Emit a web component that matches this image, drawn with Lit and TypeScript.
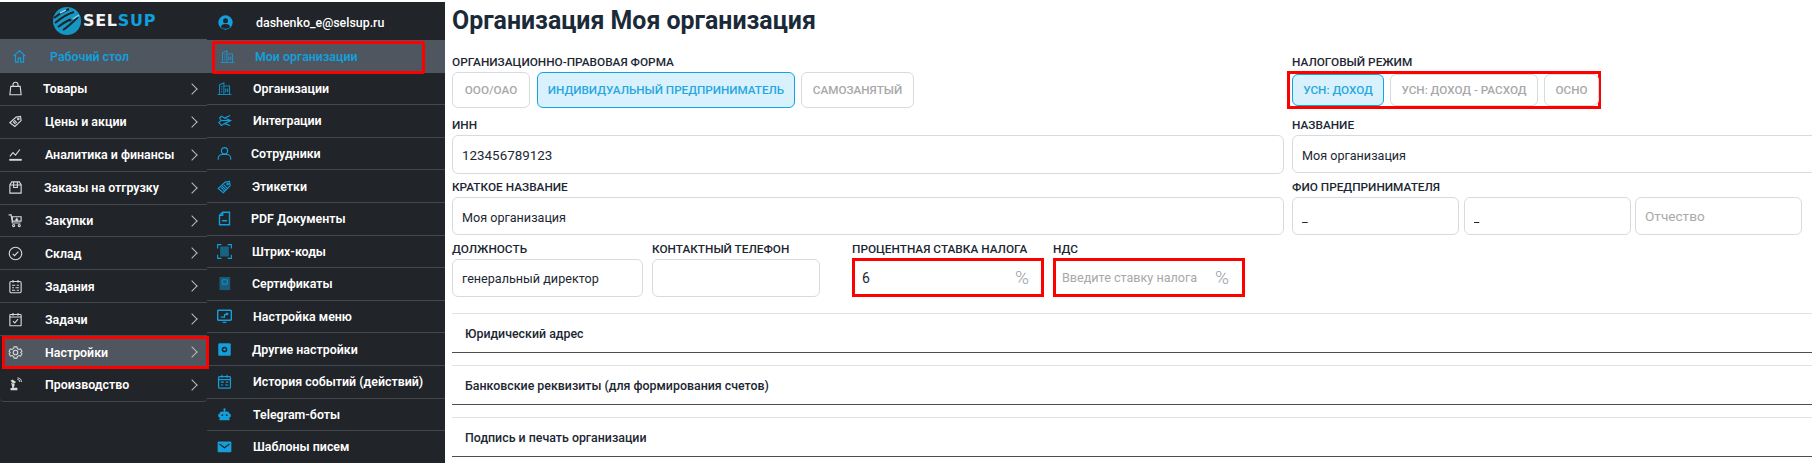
import { LitElement, html, css, svg } from "lit";
import { customElement } from "lit/decorators.js";

const icons: Record<string, any> = {
  acct: svg`<circle cx="12" cy="12" r="11.500" fill="currentColor" stroke="none"/><circle cx="12" cy="9" r="4" fill="#212429" stroke="none"/><path d="M4.500 19c1-3.500 4-4.500 7.500-4.500s6.500 1 7.500 4.500a10.500 10.500 0 0 1-15 0z" fill="#212429" stroke="none"/>`,
  home: svg`<path d="M2.500 11.500 12 3l9.500 8.500M5.500 9.500V21H10v-6.500h4V21h4.500V9.500"/>`,
  bag: svg`<path d="M4.500 8.500h15L21 22H3zM8 8.500V6a4 4 0 0 1 8 0v2.500"/>`,
  tag: svg`<path d="M3 14 13 5l7-1 1 6.500L11 20z"/><circle cx="16.500" cy="8" r="1.200"/><path d="m8 12 4 4M10 10l4 4"/>`,
  chart: svg`<path d="m3 15 5-6 4 4 7-9"/><path d="M2 20.500h20" stroke-width="3"/>`,
  box: svg`<path d="M3 7.500 6 3h12l3 4.500V21H3zM3 8h18M9 3v9h6V3"/>`,
  cart: svg`<path d="M1 3h4l2 13h13M7 6h14v7H7zM14 7.500v4M12 10l2 2 2-2"/><circle cx="9" cy="20" r="1.700"/><circle cx="18" cy="20" r="1.700"/>`,
  check: svg`<circle cx="12" cy="12" r="10"/><path d="m7.500 12.500 3 3 6-6.500"/>`,
  cal: svg`<rect x="3" y="4" width="18" height="18" rx="2"/><path d="M8 1.500V6M16 1.500V6M6.500 10h5M14 10h3.500M6.500 14h3M12 14h5.500M6.500 18h5M14 18h3.500"/>`,
  calc: svg`<rect x="3" y="4" width="18" height="18" rx="1"/><path d="M8 1.500V6M16 1.500V6M3 8h18M8 14.500l3 3 5-6"/>`,
  gear: svg`<path d="M9.500 2h5l.8 3 2.800 1.500 3-.8 2.400 4.300L21.300 12l2.200 2-2.400 4.300-3-.8-2.800 1.600-.8 2.900h-5l-.8-2.900-2.800-1.600-3 .8L.5 14l2.200-2L.5 9.900l2.400-4.200 3 .8 2.800-1.600z" transform="translate(1.200 1.200) scale(.9)"/><circle cx="12" cy="12" r="3.600"/>`,
  robot: svg`<path d="M5 9 11 12 9 17H15L15 21H4V18L7 17z" fill="currentColor" stroke="none"/><path d="M7 4 13 8 9 11 4 6z" fill="currentColor" stroke="none"/><path d="M15 4a4 4 0 0 1 4 4M15 1.500a6.500 6.500 0 0 1 6.500 6.500" stroke-width="1.500"/>`,
  build: svg`<g opacity=".8"><path d="M1 21.500h22M4 21V6l7-3v18M11 8h9v13M6.500 9h2M6.500 13h2M6.500 17h2M14 12v6M17 12v6"/></g>`,
  integ: svg`<path d="M21 4 12 8l-5-3-3 3 3 4-4 3 4 5 5-3 9 3M12 8l10 4-10 5M7 12h15"/>`,
  user: svg`<circle cx="12" cy="7.500" r="5"/><path d="M2 22v-2c0-4 3-6.500 6-6.500h8c3 0 6 2.500 6 6.500v2"/>`,
  tagb: svg`<path d="M2 15 13 5l7-1 1 7L10 22z"/><circle cx="17" cy="8" r="1.300"/><path d="m6 13 6 6M8 11l6 6M10.500 9l6 6"/>`,
  pdf: svg`<path d="M9 2h11v20H4V7zM9 2v5H4M8 15.500h8" stroke-width="2.200"/>`,
  bar: svg`<path d="M1 7V1h6M17 1h6v6M23 17v6h-6M7 23H1v-6"/><rect x="5" y="4" width="14" height="16" fill="currentColor" opacity=".5" stroke="none"/>`,
  cert: svg`<rect x="4" y="1.500" width="17" height="21" fill="currentColor" opacity=".45" stroke="none"/><rect x="8.500" y="6" width="8" height="7" rx="1" opacity=".7"/>`,
  mon: svg`<rect x="1" y="2" width="22" height="16" rx="2" stroke-width="2.500"/><path d="M6 13h6v-4h6M9 21.500h6M14 7h4" stroke-width="2"/>`,
  gearb: svg`<rect x="2" y="2" width="20" height="20" rx="2" fill="currentColor" stroke="none"/><circle cx="12" cy="12" r="4.500" fill="#212429" stroke="none"/><circle cx="12" cy="12" r="2" fill="currentColor" stroke="none"/>`,
  calb: svg`<rect x="2.500" y="4" width="19" height="18.500" rx="1.500" stroke-width="2"/><path d="M8 1v5M16 1v5M2.500 9h19M6 13h5M14 13h4M6 17.500h4M13 17.500h5" stroke-width="1.800"/>`,
  bot: svg`<path d="M12 2a2 2 0 0 1 1 3.700V7h3a4 4 0 0 1 4 4h2v5h-2v5H4v-5H2v-5h2a4 4 0 0 1 4-4h3V5.700A2 2 0 0 1 12 2z" fill="currentColor" stroke="none"/><circle cx="8.500" cy="13" r="1.500" fill="#212429" stroke="none"/><circle cx="15.500" cy="13" r="1.500" fill="#212429" stroke="none"/>`,
  mail: svg`<rect x="1" y="4" width="22" height="17" rx="1.500" fill="currentColor" stroke="none"/><path d="m4 8 8 6 8-6" stroke="#212429" stroke-width="2"/>`,
};

const ico = (n: string, size = 16) => html`<svg class="ico" width=${size} height=${size} viewBox="0 0 24 24" fill="none" stroke="currentColor" stroke-width="1.800">${icons[n]}</svg>`;

const left = [
  ["bag", "Товары", 29],
  ["tag", "Цены и акции", 31],
  ["chart", "Аналитика и финансы", 31],
  ["box", "Заказы на отгрузку", 30],
  ["cart", "Закупки", 31],
  ["check", "Склад", 31],
  ["cal", "Задания", 31],
  ["calc", "Задачи", 31],
  ["gear", "Настройки", 31, "mark"],
  ["robot", "Производство", 31],
];
const right = [
  ["build", "Организации", 29],
  ["integ", "Интеграции", 29],
  ["user", "Сотрудники", 27],
  ["tagb", "Этикетки", 28],
  ["pdf", "PDF Документы", 27],
  ["bar", "Штрих-коды", 28],
  ["cert", "Сертификаты", 28],
  ["mon", "Настройка меню", 29],
  ["gearb", "Другие настройки", 28],
  ["calb", "История событий (действий)", 29],
  ["bot", "Telegram-боты", 29],
  ["mail", "Шаблоны писем", 29],
];

@customElement("app-root")
export class AppRoot extends LitElement {
  static styles = css`
    :host { display: block; width: 1812px; height: 463px; overflow: hidden; font-family: Roboto, sans-serif; background: #fff; }
    * { box-sizing: border-box; }
    .page { display: flex; height: 463px; }
    .nav { width: 207px; flex: none; background: #212429; margin-top: 2px; height: 461px; color: #fff; position: relative; z-index: 1; }
    .sub { width: 238px; flex: none; background: #212429; margin-top: 2px; height: 461px; color: #fff; }
    .logo { height: 37px; display: flex; align-items: center; padding: 0 0 0 52px; gap: 1px; }
    .logo-t { font: 900 16px "DejaVu Sans", sans-serif; letter-spacing: .7px; color: #f2f4f5; }
    .logo-t b { color: #0f9fdc; font-weight: 900; }
    .mrow { height: 32.9px; display: flex; align-items: center; border-bottom: 1px solid #44484d; font-size: 12.4px; font-weight: 600; position: relative; color: #fff; }
    .mrow .ic { width: 30px; flex: none; display: flex; justify-content: center; color: #d9d9d9; }
    .mrow .lb { flex: 1; white-space: nowrap; position: relative; }
    .chev { width: 8px; height: 8px; border-top: 1px solid #bbb; border-right: 1px solid #bbb; transform: rotate(45deg); position: absolute; left: 188px; top: 12px; }
    .home { height: 34px; background: #4f565f; border: 0; color: #129fdc; }
    .home .ic { color: #129fdc; width: 38px; }
    .home .lb { margin-left: 12px; color: #129fdc; }
    .mark { border: 0; }
    .mark::before { content: ""; position: absolute; left: 2px; right: -2px; top: 0; bottom: 0; background: #4f565f; border: 3px solid #f00; }
    .mark .ic { position: relative; }
    .last { border-radius: 0 0 4px 4px; }
    .hdr { height: 38px; display: flex; align-items: center; padding-top: 3px; font-size: 12.4px; font-weight: 500; }
    .hdr .ic { width: 36px; display: flex; justify-content: center; color: #129fdc; }
    .hdr .lb { margin-left: 13px; }
    .srow { height: 32.6px; display: flex; align-items: center; border-bottom: 1px solid #44484d; font-size: 12.4px; font-weight: 600; white-space: nowrap; }
    .srow .ic { width: 34px; display: flex; justify-content: center; color: #129fdc; flex: none; }
    .sact { background: #4f565f; position: relative; color: #129fdc; border: 0; }
    .sact .box { position: absolute; left: 5px; top: 1px; width: 213px; height: 33px; border: 3px solid #f00; border-radius: 2px; }
    .sact .ic { width: 40px; }
    .sact .lb { margin-left: 8px; }
    main { flex: 1; min-width: 0; overflow: hidden; padding-left: 7px; color: #1c2733; }
    h1 { margin: 0; height: 53px; padding-top: 7px; font-size: 24.9px; line-height: 28px; font-weight: 700; color: #1b2a38; white-space: nowrap; }
    .grid { display: grid; grid-template-columns: 832px 540px; column-gap: 8px; }
    .f { min-width: 0; }
    .f.r1 { height: 63px; }
    .f.r2 { height: 62px; }
    .f.r3 { height: 62px; }
    label { display: block; height: 19px; line-height: 18px; font-size: 11.8px; font-weight: 500; color: #1c2733; white-space: nowrap; }
    .btns { display: flex; }
    .btn { height: 36px; border: 1px solid #d6dbdf; border-radius: 6px; background: #fff; color: #a8a8a8; font: 500 11.7px Roboto, sans-serif; display: flex; align-items: center; justify-content: center; white-space: nowrap; flex: none; }
    .btn.on { background: #d9f1fc; border-color: #0ea5e0; color: #27a7e0; }
    .w78 { width: 78px; margin-right: 7px; }
    .w258 { width: 258px; margin-right: 6px; }
    .w113 { width: 113px; }
    .redbox { display: inline-flex; border: 3px solid #f00; margin: -1px 0 0 -5px; padding: 0 0 0 2px; height: 38px; width: 314px; }
    .redbox .btn { height: 32px; }
    .w92 { width: 92px; margin-right: 6px; }
    .w148 { width: 148px; margin-right: 6px; }
    .w55 { width: 55px; }
    .inp { display: flex; align-items: center; height: 38px; border: 1px solid #d6dbdf; border-radius: 6px; padding: 2px 9px 0; background: #fff; }
    .inp input { border: 0; outline: 0; padding: 0; flex: 1; width: 100%; min-width: 0; background: transparent; font: 400 12.6px Roboto, sans-serif; color: #1c2733; }
    .inp input::placeholder { color: #a8a8a8; opacity: 1; }
    .tall { height: 39px; }
    .s134 input { font-size: 13.4px; }
    .s126 { padding-top: 0; }
    .s14 input { font-size: 14px; }
    .s136 { padding-top: 0; }
    .s136 input { font-size: 13.6px; }
    .trio { display: flex; width: 512px; }
    .trio .inp { flex: none; width: 167px; margin-right: 4.5px; }
    .row4 { display: flex; height: 73px; }
    .row4 > div { flex: none; }
    .c1 { width: 200px; } .c1 .inp { width: 191px; }
    .c2 { width: 200px; } .c2 .inp { width: 168px; }
    .c3 { width: 201px; } .c4 { width: 192px; }
    .inp.red { width: 192px; border: 3px solid #f00; border-radius: 0; height: 39px; margin-top: -1px; padding: 0 12px 0 7px; }
    .c4 .inp.red { padding: 0 13px 0 6px; }
    .pct { color: #9aa0a6; font-size: 19px; font-weight: 300; }
    .acc { margin-bottom: 12px; height: 40px; border-top: 1px solid #dfe3e6; border-bottom: 1px solid #4b4f54; display: flex; align-items: center; padding-left: 13px; font-size: 12.4px; font-weight: 500; color: #1c2733; }
  `;

  render() {
    return html`<div class="page">
      <nav class="nav">
        <div class="logo">
          <svg width="30" height="30" viewBox="0 0 30 30">
            <circle cx="15" cy="15" r="14" fill="#1597c4"/>
            <path d="M2 12C7 8 12 5 17 3M3 17C9 12 15 8 22 6M6 21C10 18 13 16 17 14M11 24C16 21 21 16 26 11" stroke="#212429" stroke-width="2" fill="none"/>
            <path d="M8 7 14 4M21 13l6-4" stroke="#8fd3ea" stroke-width="1.500" fill="none"/>
            <circle cx="18" cy="14" r="1.500" fill="#212429"/>
          </svg>
          <span class="logo-t">SEL<b>SUP</b></span>
        </div>
        <div class="mrow home"><span class="ic">${ico("home", 15)}</span><span class="lb">Рабочий стол</span></div>
        ${left.map((r, i) => html`<div class="mrow ${r[3] || ""} ${i === 9 ? "last" : ""}">
          <span class="ic">${ico(r[0] as string, 15)}</span>
          <span class="lb" style="margin-left:${(r[2] as number) - 30 + 14}px">${r[1]}</span>
          <span class="chev"></span>
        </div>`)}
      </nav>
      <aside class="sub">
        <div class="hdr"><span class="ic">${ico("acct", 15)}</span><span class="lb">dashenko_e@selsup.ru</span></div>
        <div class="srow sact"><span class="ic">${ico("build", 15)}</span><span class="lb">Мои организации</span><span class="box"></span></div>
        ${right.map((r) => html`<div class="srow"><span class="ic">${ico(r[0] as string, 15)}</span><span class="lb" style="margin-left:${(r[2] as number) - 17}px">${r[1]}</span></div>`)}
      </aside>
      <main>
        <h1>Организация Моя организация</h1>
        <div class="grid">
          <div class="f r1"><label>ОРГАНИЗАЦИОННО-ПРАВОВАЯ ФОРМА</label>
            <div class="btns"><span class="btn w78">ООО/ОАО</span><span class="btn on w258">ИНДИВИДУАЛЬНЫЙ ПРЕДПРИНИМАТЕЛЬ</span><span class="btn w113">САМОЗАНЯТЫЙ</span></div></div>
          <div class="f r1"><label>НАЛОГОВЫЙ РЕЖИМ</label>
            <div class="redbox"><span class="btn on w92">УСН: ДОХОД</span><span class="btn w148">УСН: ДОХОД - РАСХОД</span><span class="btn w55">ОСНО</span></div></div>
          <div class="f r2"><label>ИНН</label><div class="inp tall s134"><input .value=${"123456789123"} /></div></div>
          <div class="f r2"><label>НАЗВАНИЕ</label><div class="inp"><input .value=${"Моя организация"} /></div></div>
          <div class="f r3"><label>КРАТКОЕ НАЗВАНИЕ</label><div class="inp"><input .value=${"Моя организация"} /></div></div>
          <div class="f r3"><label>ФИО ПРЕДПРИНИМАТЕЛЯ</label><div class="trio"><div class="inp"><input .value=${"_"} /></div><div class="inp"><input .value=${"_"} /></div><div class="inp s136"><input placeholder="Отчество" /></div></div></div>
        </div>
        <div class="row4">
          <div class="c1"><label>ДОЛЖНОСТЬ</label><div class="inp s126"><input .value=${"генеральный директор"} /></div></div>
          <div class="c2"><label>КОНТАКТНЫЙ ТЕЛЕФОН</label><div class="inp"><input /></div></div>
          <div class="c3"><label>ПРОЦЕНТНАЯ СТАВКА НАЛОГА</label><div class="inp red s14"><input .value=${"6"} /><span class="pct">%</span></div></div>
          <div class="c4"><label>НДС</label><div class="inp red s126"><input placeholder="Введите ставку налога" /><span class="pct">%</span></div></div>
        </div>
        <div class="acc">Юридический адрес</div>
        <div class="acc">Банковские реквизиты (для формирования счетов)</div>
        <div class="acc">Подпись и печать организации</div>
      </main>
    </div>`;
  }
}
